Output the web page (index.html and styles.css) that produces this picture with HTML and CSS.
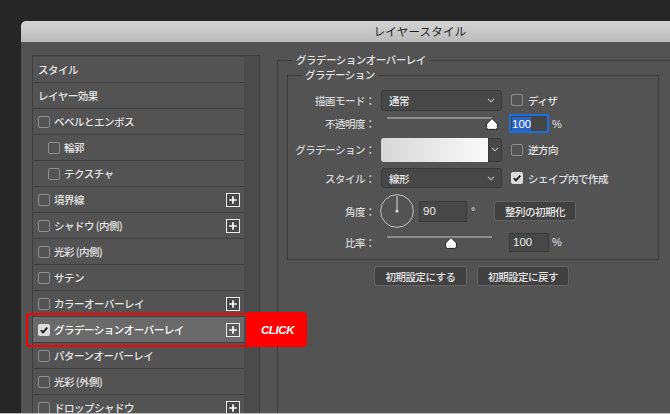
FILE: index.html
```html
<!DOCTYPE html>
<html lang="ja">
<head>
<meta charset="utf-8">
<title>レイヤースタイル</title>
<link rel="stylesheet" href="styles.css">
</head>
<body>
<div class="screen">
  <div class="window">
    <div class="titlebar">レイヤースタイル</div>
    <div class="content">
      <div class="list-panel">
        <ul class="style-list">
          <li class="item"><span class="item-text">スタイル</span></li>
          <li class="item"><span class="item-text">レイヤー効果</span></li>
          <li class="item"><span class="cb"></span><span class="item-text">ベベルとエンボス</span></li>
          <li class="item indent"><span class="cb"></span><span class="item-text">輪郭</span></li>
          <li class="item indent"><span class="cb"></span><span class="item-text">テクスチャ</span></li>
          <li class="item"><span class="cb"></span><span class="item-text">境界線</span>
            <svg class="plus" width="14" height="14" viewBox="0 0 14 14"><rect x="0.5" y="0.5" width="13" height="13" fill="#474747" stroke="#ececec"/><path d="M7 3.2V10.8M3.2 7H10.8" stroke="#fff" stroke-width="1.7"/></svg></li>
          <li class="item"><span class="cb"></span><span class="item-text">シャドウ (内側)</span>
            <svg class="plus" width="14" height="14" viewBox="0 0 14 14"><rect x="0.5" y="0.5" width="13" height="13" fill="#474747" stroke="#ececec"/><path d="M7 3.2V10.8M3.2 7H10.8" stroke="#fff" stroke-width="1.7"/></svg></li>
          <li class="item"><span class="cb"></span><span class="item-text">光彩 (内側)</span></li>
          <li class="item"><span class="cb"></span><span class="item-text">サテン</span></li>
          <li class="item"><span class="cb"></span><span class="item-text">カラーオーバーレイ</span>
            <svg class="plus" width="14" height="14" viewBox="0 0 14 14"><rect x="0.5" y="0.5" width="13" height="13" fill="#474747" stroke="#ececec"/><path d="M7 3.2V10.8M3.2 7H10.8" stroke="#fff" stroke-width="1.7"/></svg></li>
          <li class="item selected">
            <svg class="cb-on" width="12" height="12" viewBox="0 0 12 12"><rect x="0" y="0" width="12" height="12" rx="2" fill="#dcdcdc"/><path d="M2.8 6.2L5 8.4L9.3 3.6" fill="none" stroke="#1e1e1e" stroke-width="1.9"/></svg>
            <span class="item-text">グラデーションオーバーレイ</span>
            <svg class="plus" width="14" height="14" viewBox="0 0 14 14"><rect x="0.5" y="0.5" width="13" height="13" fill="#5a5a5a" stroke="#ececec"/><path d="M7 3.2V10.8M3.2 7H10.8" stroke="#fff" stroke-width="1.7"/></svg>
            <div class="callout"><div class="callout-frame"></div><div class="callout-badge">CLICK</div></div>
          </li>
          <li class="item"><span class="cb"></span><span class="item-text">パターンオーバーレイ</span></li>
          <li class="item"><span class="cb"></span><span class="item-text">光彩 (外側)</span></li>
          <li class="item"><span class="cb"></span><span class="item-text">ドロップシャドウ</span>
            <svg class="plus" width="14" height="14" viewBox="0 0 14 14"><rect x="0.5" y="0.5" width="13" height="13" fill="#474747" stroke="#ececec"/><path d="M7 3.2V10.8M3.2 7H10.8" stroke="#fff" stroke-width="1.7"/></svg></li>
        </ul>
        <div class="scroll-col"></div>
      </div>

      <fieldset class="group-outer">
        <legend class="legend-outer">グラデーションオーバーレイ</legend>
        <fieldset class="group-inner">
          <legend class="legend-inner">グラデーション</legend>
          <div class="rows">
            <div class="row r1">
              <span class="row-label">描画モード：</span>
              <div class="select"><span>通常</span><svg width="8" height="5" viewBox="0 0 8 5"><polyline points="1,0.8 4,3.8 7,0.8" fill="none" stroke="#bdbdbd" stroke-width="1.1"/></svg></div>
              <label class="check-label"><span class="cb"></span>ディザ</label>
            </div>
            <div class="row r2">
              <span class="row-label">不透明度：</span>
              <div class="slider"><div class="track"></div>
                <svg class="thumb thumb-max" width="12" height="12" viewBox="0 0 12 12"><path d="M6 0.6L11.4 6V9.6Q11.4 11.4 9.6 11.4H2.4Q0.6 11.4 0.6 9.6V6Z" fill="#fff" stroke="#1c1c1c" stroke-width="1"/></svg></div>
              <div class="num focus"><span class="sel">100</span></div>
              <span class="unit">%</span>
            </div>
            <div class="row r3">
              <span class="row-label">グラデーション：</span>
              <div class="grad-pick"><div class="swatch"></div><div class="drop"><svg width="8" height="5" viewBox="0 0 8 5"><polyline points="1,0.8 4,3.8 7,0.8" fill="none" stroke="#bdbdbd" stroke-width="1.1"/></svg></div></div>
              <label class="check-label"><span class="cb"></span>逆方向</label>
            </div>
            <div class="row r4">
              <span class="row-label">スタイル：</span>
              <div class="select short"><span>線形</span><svg width="8" height="5" viewBox="0 0 8 5"><polyline points="1,0.8 4,3.8 7,0.8" fill="none" stroke="#bdbdbd" stroke-width="1.1"/></svg></div>
              <label class="check-label">
                <svg class="cb-on" width="12" height="12" viewBox="0 0 12 12"><rect x="0" y="0" width="12" height="12" rx="2" fill="#dcdcdc"/><path d="M2.8 6.2L5 8.4L9.3 3.6" fill="none" stroke="#1e1e1e" stroke-width="1.9"/></svg>シェイプ内で作成</label>
            </div>
            <div class="row r5">
              <span class="row-label">角度：</span>
              <svg class="dial" width="34" height="34" viewBox="0 0 34 34"><circle cx="17" cy="17" r="16.4" fill="none" stroke="#c4c4c4" stroke-width="1"/><line x1="17" y1="17" x2="17" y2="2" stroke="#d8d8d8" stroke-width="1"/><circle cx="17" cy="17" r="1.6" fill="#d8d8d8"/></svg>
              <div class="num wide">90</div>
              <span class="deg">°</span>
              <button class="btn align-btn">整列の初期化</button>
            </div>
            <div class="row r6">
              <span class="row-label">比率：</span>
              <div class="slider"><div class="track"></div>
                <svg class="thumb thumb-mid" width="12" height="12" viewBox="0 0 12 12"><path d="M6 0.6L11.4 6V9.6Q11.4 11.4 9.6 11.4H2.4Q0.6 11.4 0.6 9.6V6Z" fill="#fff" stroke="#1c1c1c" stroke-width="1"/></svg></div>
              <div class="num">100</div>
              <span class="unit">%</span>
            </div>
          </div>
        </fieldset>
        <div class="actions">
          <button class="btn btn-a">初期設定にする</button>
          <button class="btn btn-b">初期設定に戻す</button>
        </div>
      </fieldset>
    </div>
  </div>
</div>
</body>
</html>
```
FILE: styles.css
```css
* { box-sizing: border-box; }
html, body { margin: 0; padding: 0; }
body {
  background: #262626;
  font-family: "Noto Sans CJK JP", "Noto Sans", sans-serif;
  font-size: 10.5px;
  font-weight: 500;
  letter-spacing: -0.5px;
  color: #e2e2e2;
}
.screen {
  width: 670px;
  height: 414px;
  overflow: hidden;
  padding: 21px 0 0 21px;
  border-bottom: 1px solid #bdbdbd;
  background: #262626;
}
.window {
  width: 798px;
  height: 392px;
  border-radius: 5px 0 0 0;
  overflow: hidden;
  background: #535353;
  display: flex;
  flex-direction: column;
}
.titlebar {
  height: 21px;
  flex: none;
  background: linear-gradient(#d4d4d4, #bababa);
  color: #1e1e1e;
  font-size: 11.5px;
  letter-spacing: 0.2px;
  text-align: center;
  line-height: 21px;
  font-weight: 400;
}
.content {
  flex: 1;
  min-height: 0;
  display: flex;
  align-items: flex-start;
  padding: 11px 0 0 11px;
  overflow: hidden;
}

/* left list */
.list-panel {
  margin-top: 2px;
  width: 228px;
  flex: none;
  display: flex;
  border: 1px solid #3e3e3e;
  background: #4b4b4b;
}
.style-list {
  list-style: none;
  margin: 0;
  padding: 1px 0 0;
  width: 211px;
}
.scroll-col { width: 15px; }
.item {
  position: relative;
  height: 26px;
  border-bottom: 1px solid #3f3f3f;
  background: #535353;
  display: flex;
  align-items: center;
  gap: 4px;
  padding: 0 4px 0 5px;
  color: #e6e6e6;
}
.item.indent { padding-left: 15px; }
.item-text { flex: 1; white-space: nowrap; }
.item.selected { background: #6a6a6a; color: #fff; }
.cb {
  width: 12px;
  height: 12px;
  flex: none;
  border: 1px solid #8e8e8e;
  border-radius: 2px;
  display: inline-block;
}
.cb-on { flex: none; display: block; }
.plus { flex: none; display: block; }
.callout {
  position: absolute;
  left: -7px;
  top: -4px;
  display: flex;
  z-index: 3;
}
.callout-frame {
  width: 222px;
  height: 34px;
  border: 2px solid #ff0000;
  border-radius: 4px 0 0 4px;
}
.callout-badge {
  width: 59px;
  height: 35px;
  margin-top: -1px;
  background: #ff0000;
  border-radius: 0 4px 4px 0;
  color: #fff;
  font-family: "Liberation Sans", Arial, sans-serif;
  font-style: italic;
  font-weight: 700;
  font-size: 11.5px;
  letter-spacing: -0.4px;
  display: flex;
  align-items: center;
  justify-content: center;
}

/* right groups */
.group-outer {
  margin: 0 0 0 17px;
  padding: 1px 0 0 9px;
  border: 1px solid #3b3b3b;
  flex: 1;
  min-width: 0;
  height: 420px;
}
.legend-outer {
  margin-left: 5px;
  padding: 0 4px;
  line-height: 14px;
  color: #e2e2e2;
}
.group-inner {
  margin: 0;
  padding: 0 0 4px 0;
  width: 372px;
  border: 1px solid #3b3b3b;
}
.legend-inner {
  margin-left: 13px;
  padding: 0 4px;
  line-height: 14px;
  color: #e2e2e2;
}
.rows { padding-top: 7px; }
.row { display: flex; align-items: center; color: #d6d6d6; }
.r1 { height: 22px; }
.r2 { height: 25px; }
.r3 { height: 27px; }
.r4 { height: 30px; }
.r5 { height: 36px; }
.r6 { height: 26px; }
.row-label {
  width: 87px;
  flex: none;
  margin-right: 6px;
  text-align: right;
  white-space: nowrap;
}
.select {
  width: 121px;
  height: 21px;
  flex: none;
  background: #474747;
  border: 1px solid #3a3a3a;
  border-radius: 3px;
  display: flex;
  align-items: center;
  justify-content: space-between;
  padding: 0 6px 0 7px;
  color: #e8e8e8;
}
.select.short { height: 20px; }
.select svg, .drop svg { display: block; }
.check-label {
  margin-left: 9px;
  display: flex;
  align-items: center;
  gap: 5px;
  color: #e2e2e2;
  white-space: nowrap;
}
.slider {
  position: relative;
  width: 121px;
  height: 12px;
  flex: none;
  margin-top: -1px;
}
.track {
  margin-left: 6px;
  width: 105px;
  height: 2px;
  background: #8c8c8c;
}
.thumb { position: absolute; top: 1px; display: block; }
.thumb-max { left: 105px; }
.thumb-mid { left: 64px; }
.num {
  width: 40px;
  height: 19px;
  flex: none;
  margin-left: 7px;
  background: #474747;
  border: 1px solid #3a3a3a;
  font-family: "Liberation Sans", Arial, sans-serif;
  font-size: 11.5px;
  letter-spacing: 0;
  font-weight: 400;
  color: #ececec;
  display: flex;
  align-items: center;
  padding: 0 3px;
}
.num.focus {
  border: 2px solid #1b6fd8;
  padding: 0 1px;
  background: #454545;
}
.sel { background: #2b62c0; color: #fff; line-height: 14px; }
.num.wide { width: 48px; height: 21px; margin-left: 5px; }
.unit { margin-left: 3px; font-family: "Liberation Sans", Arial, sans-serif; font-size: 11px; letter-spacing: 0; color: #e2e2e2; }
.deg { margin-left: 4px; font-family: "Liberation Sans", Arial, sans-serif; font-size: 11px; color: #e2e2e2; width: 5px; }
.grad-pick { display: flex; width: 121px; height: 24px; flex: none; }
.swatch {
  width: 107px;
  height: 24px;
  border-radius: 3px 0 0 3px;
  background: linear-gradient(90deg, #d7d7d7, #f7f7f7 90%, #fafafa);
}
.drop {
  width: 14px;
  height: 24px;
  background: #474747;
  border: 1px solid #3a3a3a;
  border-radius: 0 3px 3px 0;
  display: flex;
  align-items: center;
  justify-content: center;
}
.dial { display: block; flex: none; margin-left: -1px; }
.btn {
  height: 20px;
  background: #414141;
  border: 1px solid #636363;
  border-radius: 3px;
  color: #e6e6e6;
  font-family: inherit;
  font-size: 10.5px;
  font-weight: 500;
  letter-spacing: -0.5px;
  padding: 0;
  display: flex;
  align-items: center;
  justify-content: center;
}
.align-btn { width: 82px; margin-left: 18px; }
.actions { display: flex; gap: 10px; margin: 6px 0 0 87px; }
.btn-a { width: 93px; }
.btn-b { width: 92px; }
```
